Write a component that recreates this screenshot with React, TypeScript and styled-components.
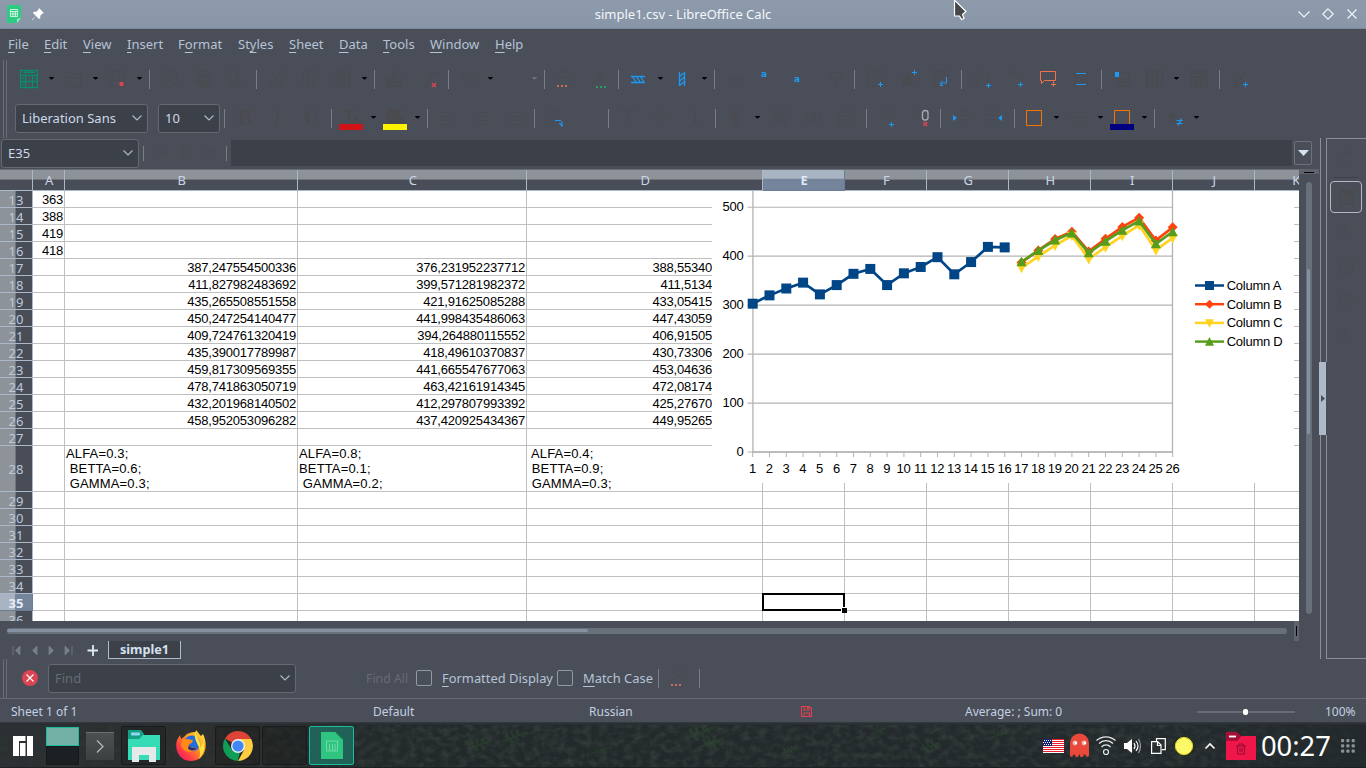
import React from 'react';
import styled, { createGlobalStyle, css } from 'styled-components';

const GlobalStyle = createGlobalStyle`
  * { box-sizing: border-box; }
  body {
    margin: 0;
    overflow: hidden;
    background: #4a4e59;
    font-family: 'Noto Sans', sans-serif;
    font-size: 13px;
    color: #b5c3d5;
  }
  svg { display: block; flex: none; overflow: visible; }
`;

const FAINT = '#4a4b4e';
const BLUE = '#1d99f3';
const RED = '#da4453';
const ORANGE = '#f67400';

const Desktop = styled.div`
  position: relative;
  width: 1366px;
  height: 768px;
  display: flex;
  flex-direction: column;
  overflow: hidden;
`;

/* ---------- title and menu ---------- */

const TitleBar = styled.header`
  height: 29px;
  flex: none;
  display: grid;
  grid-template-columns: 100px 1fr 100px;
  align-items: center;
  background: linear-gradient(#8d9aab, #8896a7);
  border-bottom: 1px solid #7b899b;
  color: #f3f7fb;
`;
const TitleText = styled.div`
  text-align: center;
  line-height: 28px;
`;
const TitleLeft = styled.div`
  display: flex;
  align-items: center;
  gap: 11px;
  padding-left: 7px;
`;
const TitleRight = styled.div`
  display: flex;
  align-items: center;
  justify-content: flex-end;
  gap: 12px;
  padding-right: 8px;
`;
const MenuBar = styled.nav`
  height: 31px;
  flex: none;
  display: flex;
  padding-left: 8px;
  line-height: 30px;
`;
const MenuItem = styled.div<{ $w: number }>`
  width: ${(p) => p.$w}px;
  white-space: nowrap;
`;
const Key = styled.span`
  text-decoration: underline;
  text-underline-offset: 3px;
  text-decoration-thickness: 1px;
`;

/* ---------- toolbars ---------- */

const ToolbarArea = styled.div`
  display: flex;
  height: 78px;
  flex: none;
`;
const Grip = styled.div`
  width: 4px;
  margin: 0 3px;
  border: solid #676c76;
  border-width: 0 1px;
`;
const ToolbarRows = styled.div`
  display: flex;
  flex-direction: column;
`;
const Toolbar = styled.div<{ $h: number; $pad: number }>`
  display: flex;
  align-items: center;
  height: ${(p) => p.$h}px;
  padding-left: ${(p) => p.$pad}px;
`;
const Tool = styled.div<{ $gap: number; $w?: number }>`
  flex: none;
  width: ${(p) => p.$w ?? 18}px;
  margin-left: ${(p) => p.$gap}px;
`;
const Separator = styled.div<{ $gap: number; $h?: number }>`
  flex: none;
  width: 1px;
  height: ${(p) => p.$h ?? 19}px;
  margin-left: ${(p) => p.$gap}px;
  background: #787d87;
`;
const Arrow = styled.div<{ $gap: number; $dim?: boolean }>`
  flex: none;
  width: 7px;
  height: 3px;
  margin: 0 0 2px ${(p) => p.$gap}px;
  background: ${(p) => (p.$dim ? '#6b7079' : '#050505')};
  clip-path: polygon(14% 0, 86% 0, 86% 33%, 57% 100%, 43% 100%, 14% 33%);
`;
const Combo = styled.div<{ $w: number; $gap?: number; $muted?: boolean }>`
  flex: none;
  display: flex;
  align-items: center;
  justify-content: space-between;
  width: ${(p) => p.$w}px;
  height: 29px;
  margin-left: ${(p) => p.$gap ?? 0}px;
  padding: 0 5px 1px 6px;
  border: 1px solid #636873;
  border-radius: 3px;
  background: #3c4049;
  color: ${(p) => (p.$muted ? '#676c76' : '#ccd9e9')};
  line-height: 20px;
  white-space: nowrap;
`;

/* ---------- work area ---------- */

const WorkArea = styled.div`
  display: flex;
  height: 521px;
  flex: none;
`;
const MainPane = styled.div`
  width: 1319px;
  display: flex;
  flex-direction: column;
`;
const FormulaBar = styled.div`
  display: flex;
  align-items: center;
  height: 32px;
  padding: 0 6px 1px 1px;
  border-bottom: 1px solid #6a6e77;
`;
const FormulaInput = styled.div`
  width: 1061px;
  height: 26px;
  margin: 0 2px 0 4px;
  background: #3c4049;
`;
const ExpandButton = styled.div`
  width: 18px;
  height: 24px;
  border: 1px solid #6c727d;
  border-radius: 2px;
  display: flex;
  align-items: center;
  justify-content: center;
`;
const SheetRow = styled.div`
  display: flex;
  height: 451px;
`;
const Sheet = styled.div`
  position: relative;
  width: 1299px;
  height: 451px;
  overflow: hidden;
  background: #fff;
`;
const SheetLine = styled.div<{ $h: number }>`
  display: flex;
  height: ${(p) => p.$h}px;
`;
const activeColumn = css`
  background: linear-gradient(#a9b4c2 0 8px, #9da7b5 8px 9px, #73849b 9px);
  border-color: #6c7c93;
  color: #dfeaf7;
  font-weight: bold;
`;
const activeRow = css`
  background: linear-gradient(90deg, #a9b4c2 0 15px, #73849b 15px);
  border-color: #6c7c93;
  color: #e3edf9;
  font-weight: bold;
`;
const ColumnHead = styled.div<{ $w: number; $active?: boolean }>`
  flex: none;
  width: ${(p) => p.$w}px;
  height: 21px;
  padding-left: 1.5px;
  border: solid #aab8c9;
  border-width: 0 1px 1px 0;
  background: linear-gradient(#8e9299 0 9px, #70747c 9px 10px, #494d58 10px);
  text-align: center;
  line-height: 21px;
  color: #c9d6e6;
  ${(p) => p.$active && activeColumn}
`;
const RowHead = styled.div<{ $active?: boolean; $tall?: boolean }>`
  flex: none;
  display: flex;
  align-items: center;
  justify-content: center;
  width: 33px;
  border: solid #aab8c9;
  border-width: 0 1px 1px 0;
  background: linear-gradient(90deg, #8e9299 0 15px, #70747c 15px 16px, #494d58 16px);
  line-height: 12px;
  padding-top: ${(p) => (p.$tall ? 0 : 2)}px;
  color: #bccadb;
  ${(p) => p.$active && activeRow}
`;
const Cell = styled.div<{ $w: number; $covered?: boolean; $text?: boolean }>`
  flex: none;
  width: ${(p) => p.$w}px;
  border: solid #bfbfbf;
  border-width: 0 1px 1px 0;
  padding-right: ${(p) => (p.$covered ? 50 : 1)}px;
  padding-left: 1px;
  font-family: 'Liberation Sans', Arial, sans-serif;
  font-size: 13px;
  line-height: ${(p) => (p.$text ? 15 : 17)}px;
  letter-spacing: ${(p) => (p.$text ? 0.15 : -0.21)}px;
  text-align: ${(p) => (p.$text ? 'left' : 'right')};
  white-space: pre;
  color: #000;
`;
const CellCursor = styled.div`
  position: absolute;
  left: 762px;
  top: 423px;
  width: 83px;
  height: 18px;
  border: 2px solid #000;
  &::after {
    content: '';
    position: absolute;
    right: -4px;
    bottom: -4px;
    width: 5px;
    height: 5px;
    background: #000;
    box-shadow: -1px -1px 0 #fff;
  }
`;
const ChartFrame = styled.div`
  position: absolute;
  left: 712px;
  top: 21px;
  width: 582px;
  height: 292px;
  background: #fff;
  overflow: hidden;
`;
const VerticalScroll = styled.div`
  width: 20px;
  display: flex;
  flex-direction: column;
  align-items: center;
`;
const SplitTop = styled.div`
  align-self: stretch;
  height: 5px;
  margin-top: -1px;
  background: #5f636d;
  padding: 3px 5px 0;
  &::after {
    content: '';
    display: block;
    height: 1px;
    background: #000;
  }
`;
const VTrack = styled.div`
  width: 6px;
  height: 432px;
  margin-top: 8px;
  border-radius: 3px;
  background: #67707b;
  padding: 87px 1px 0 1px;
`;
const VThumb = styled.div`
  width: 3px;
  height: 165px;
  border-radius: 2px;
  background: #8591a1;
`;
const HorizontalScroll = styled.div`
  display: flex;
  height: 20px;
  flex: none;
  padding-left: 7px;
`;
const HTrack = styled.div`
  width: 1280px;
  height: 6px;
  margin: 7px 7px 0 0;
  border-radius: 3px;
  background: #67707b;
  padding-top: 1px;
`;
const HThumb = styled.div`
  width: 581px;
  height: 3px;
  border-radius: 2px;
  background: #8591a1;
`;
const SplitEnd = styled.div`
  width: 5px;
  background: #5f636d;
  padding: 5px 2px;
  &::after {
    content: '';
    display: block;
    height: 10px;
    width: 1px;
    background: #000;
  }
`;
const TabBar = styled.div`
  display: flex;
  height: 18px;
  flex: none;
  align-items: center;
  padding-left: 11px;
`;
const TabNav = styled.div`
  display: flex;
  gap: 9px;
  width: 76px;
`;
const SheetTab = styled.div`
  width: 73px;
  height: 18px;
  margin-left: 10px;
  border: 1px solid #aebccd;
  border-top: 0;
  background: #3c4049;
  color: #d5e1ef;
  font-size: 12.7px;
  font-weight: bold;
  line-height: 17px;
  text-align: center;
`;

/* ---------- sidebar ---------- */

const Splitter = styled.div`
  width: 8px;
  padding-left: 1px;
  display: flex;
  flex-direction: column;
`;
const SplitRail = styled.div<{ $h: number }>`
  height: ${(p) => p.$h}px;
  width: 7px;
  border: solid #8b9098;
  border-width: 0 1px;
  background: #4a4e59;
`;
const SplitHandle = styled.div`
  height: 73px;
  margin-left: -1px;
  width: 7px;
  background: #aebaca;
  display: flex;
  align-items: center;
  justify-content: center;
`;
const Sidebar = styled.aside`
  flex: 1;
  padding-right: 2px;
  border: solid #8b9098;
  border-width: 1px 0;
  display: flex;
  flex-direction: column;
  align-items: center;
`;
const DeckTitle = styled.div`
  height: 42px;
  padding-top: 8px;
`;
const DeckButton = styled.div<{ $active?: boolean }>`
  width: 32px;
  height: ${(p) => (p.$active ? 32 : 35)}px;
  display: flex;
  align-items: center;
  justify-content: center;
  border: 1px solid ${(p) => (p.$active ? '#b5b9bf' : 'transparent')};
  border-radius: 4px;
`;

/* ---------- find bar and status bar ---------- */

const FindBar = styled.div`
  display: flex;
  align-items: center;
  height: 39px;
  flex: none;
  padding-bottom: 1px;
`;
const FindGrip = styled(Grip)`
  align-self: stretch;
  margin-bottom: -1px;
`;
const FindAll = styled.span`
  margin-left: 70px;
  width: 50px;
  font-size: 12.3px;
  color: #666b76;
`;
const CheckBox = styled.span`
  width: 16px;
  height: 16px;
  border: 1px solid #8d98a8;
  border-radius: 2px;
  margin-right: 10px;
`;
const CheckLabel = styled.span<{ $w: number }>`
  width: ${(p) => p.$w}px;
  font-size: 12.9px;
  white-space: nowrap;
`;
const StatusBar = styled.footer`
  display: flex;
  align-items: center;
  height: 24px;
  flex: none;
  padding: 1px 0 0 11px;
  border-top: 1px solid #656a75;
  color: #c3d0e2;
  font-size: 12px;
  white-space: nowrap;
`;
const StatusField = styled.span<{ $w: number }>`
  width: ${(p) => p.$w}px;
  flex: none;
`;
const ZoomSlider = styled.span`
  width: 98px;
  height: 2px;
  margin: 1px 30px 0 0;
  background: #666b76;
  display: flex;
  align-items: center;
  justify-content: center;
  &::after {
    content: '';
    width: 5px;
    height: 6px;
    margin-right: 2px;
    border-radius: 2px;
    background: #fff;
  }
`;

/* ---------- taskbar ---------- */

const Taskbar = styled.div`
  position: relative;
  flex: none;
  height: 46px;
  padding-top: 2px;
  display: flex;
  justify-content: space-between;
  align-items: center;
  background: linear-gradient(#343a3f 0, #242a2d 3px, #22282b 100%);
  border-bottom: 1px solid #1c2124;
`;
const Foliage = styled.svg`
  position: absolute;
  inset: 0;
`;
const TaskGroup = styled.div`
  position: relative;
  display: flex;
  align-items: center;
`;
const Pager = styled.div`
  width: 33px;
  margin: 0 7px 0 13px;
`;
const Desk = styled.div<{ $on?: boolean }>`
  height: 19px;
  border: 1px solid ${(p) => (p.$on ? '#1abc9c' : '#15191b')};
  background: ${(p) => (p.$on ? '#73b0a5' : '#1c2022')};
`;
const Launcher = styled.div`
  width: 28px;
  height: 28px;
  margin-right: 7px;
  background: linear-gradient(#4c5052, #3b4041);
  border-top: 1px solid #6b6f71;
  display: flex;
  align-items: center;
  justify-content: center;
`;
const TaskButton = styled.div<{ $kind?: 'plain' | 'active' }>`
  width: 45px;
  height: 39px;
  margin-right: 2px;
  border-radius: 2px;
  display: flex;
  align-items: center;
  justify-content: center;
  border: 1px solid transparent;
  ${(p) => !p.$kind && 'border-color: #171b1d; background: rgba(0,0,0,0.16);'}
  ${(p) => p.$kind === 'plain' && 'padding-left: 2px;'}
  ${(p) => p.$kind === 'active' && 'border-color: #1abc9c; background: #216258;'}
`;
const Clock = styled.div`
  width: 80px;
  font-size: 27.3px;
  line-height: 40px;
  color: #fff;
`;
const TrayItem = styled.div<{ $w: number }>`
  width: ${(p) => p.$w}px;
  flex: none;
`;
const Pointer = styled.svg`
  position: absolute;
  left: 953px;
  top: -1px;
`;

/* ---------- drawings ---------- */

const Chevron = ({ color = '#aebccd' }: { color?: string }) => (
  <svg width="10" height="6" viewBox="0 0 10 6" fill="none" stroke={color} strokeWidth="1.1">
    <path d="M.5.5 5 5 9.5.5" />
  </svg>
);

const Plus = ({ x, y, c = BLUE }: { x: number; y: number; c?: string }) => (
  <path d={`M${x - 2} ${y + 0.5}h5M${x + 0.5} ${y - 2}v5`} stroke={c} />
);
const Dots = ({ x, y, c }: { x: number; y: number; c: string }) => (
  <path d={`M${x} ${y}h2M${x + 4} ${y}h2M${x + 8} ${y}h2`} stroke={c} strokeWidth="2" />
);
const Cross = ({ x, y }: { x: number; y: number }) => (
  <path d={`M${x - 2} ${y - 2}l4 4m0-4l-4 4`} stroke={RED} strokeWidth="1.5" />
);
const textLines = 'M2 3.5h14M2 7.5h9M2 11.5h14M2 15.5h9';

const art: Record<string, React.ReactNode> = {
  table: <path d="M.5.5h17v17H.5zM.5 5.5h17M3.5 2.5h11M5.5 5.5v12M12.5 5.5v12M.5 11.5h17M8.5 8.5h1M8.5 14.5h1M2 8.5h2M2 14.5h2M14.5 8.5h2" stroke="#0a8c6d" strokeWidth="1.3" />,
  open: <path d="M1.5 16.5v-14h5l2 2h8v12zM1.5 7.5h15" />,
  save: <><path d="M1.5 1.5h12l3 3v12h-15zM4.5 1.5v5h7v-5M4.5 16.5v-6h9v6" /><circle cx="13.5" cy="14" r="2.3" fill={RED} stroke="none" /></>,
  export: <path d="M3.5 1.5h12v11l-4 4h-8zM7 5.5v6h4v-6M11.5 16v-4h4" />,
  print: <path d="M4.5 5V1.5h9V5M1.5 5.5h15v7h-15zM4.5 10.5h9v6h-9zM4 7.5h9" strokeWidth="1.5" />,
  preview: <path d="M12.5 6V5l-4-3.5h-6v15h10M8.5 2v4h4M10 9.5a3 3 0 1 0 .1 0zM12 14l3 3" />,
  cut: <path d="M4 1l8 12M14 1L6 13M4 12a2.5 2.5 0 1 0 .1 0zM14 12a2.5 2.5 0 1 0 .1 0z" />,
  copy: <path d="M2.500 12.500v-11h10v3M6.500 4.500h9v8l-4 4h-5zM11.500 16v-4h4" />,
  paste: <path d="M2.500 2.500h13v14h-13zM6 1.500h6v3H6zM5 8.500h8M5 11.500h8" strokeWidth="1.600" />,
  brush: <path d="M8.500 1v7M3 8.500h12v3H3zM3 11.500L1.500 16.500h14V12M6 12v4M10 12v4" strokeWidth="1.600" />,
  clear: <><path d="M5 2.500h12M11.500 2.500L5 16M2 16.500h6" /><Cross x={13} y={15} /></>,
  undo: <path d="M2 4.500h9a4 4 0 0 1 0 9H9M5 1.500l-3 3 3 3" />,
  none: null,
  find: <><path d="M3 13a6 6 0 1 1 12 0M5 4l2-3h4l2 3" /><Dots x={2} y={16} c="#cf6a53" /></>,
  spell: <><path d="M2 13L7.500 2 13 13M4 9.500h7" /><Dots x={4} y={17} c="#2a9d62" /></>,
  rows: <path d="M2 6.500h14M2 12.500h14M3 6l4 6M7 6l4 6M11 6l4 6" stroke={BLUE} strokeWidth="1.300" />,
  cols: <path d="M6.500 2v14M11.500 2v14M6.500 6.500l5-4M6.500 11.500l5-5M6.500 15.500l5-4" stroke={BLUE} strokeWidth="1.300" />,
  sort: <path d="M2 9.500h14M5 6.500l-3 3 3 3M13 6.500l3 3-3 3" />,
  filter: <path d="M2 2.500h14l-6 7v6l-3-2v-4z" />,
  image: <><path d="M1.500 1.500h15v15h-15zM2 13l5-5 4 4M11 5.500h2" /><Plus x={14} y={14} /></>,
  chart: <><path d="M3.500 16v-9M7.500 16V3M11 16V5" strokeWidth="3" /><Plus x={14} y={2} /></>,
  pivot: <><path d="M1.500 1.500h15v15h-15zM1.500 5.500h15M5.500 1.500v15M9 2v3M13 2v3" /><path d="M14.500 7v6h-6M10.500 11l-2.500 2.500 2.500 2M8 15.500h3" stroke={BLUE} /></>,
  omega: <><path d="M1.500 16.500h4v-2a7 7 0 1 1 8 0" /><Plus x={15} y={15} /></>,
  link: <><path d="M2 5a5 5 0 0 1 9 0M8 11l4-4" /><Plus x={14} y={14} /></>,
  comment: <path d="M1.500 1.500h15v9H5.500l-3 3v-3h-1zM14.500 11.500v5M12 14.500h5" stroke="#f4714e" />,
  headfoot: <><path d="M3.500 1.500v15M14.500 1.500v15" /><path d="M4 3.500h10M4 14.500h10" stroke={BLUE} /></>,
  define: <><path d="M3.500 8.500h12v8h-12zM8 2.500h7v5M7 9v8M11 9v8M4 12.500h11" /><path d="M1 2h4v5H1z" fill={BLUE} stroke="none" /></>,
  freeze: <path d="M1.500 1.500h15v15h-15zM1.500 5.500h15M6.500 1.500v15M11.500 5.500v11M6.500 11.500h10" strokeWidth="1.600" />,
  split: <path d="M1.500 1.500h15v15h-15zM1.500 7h15M6.500 9v7M11.500 9v7M2 3.500h14" strokeWidth="1.600" />,
  draw: <><path d="M2 14.500L14 2.500M1 16.500h6" strokeWidth="2" /><Plus x={13} y={14} /></>,
  al: <path d={textLines} />,
  ac: <path d="M2 3.500h14M4.500 7.500h9M2 11.500h14M4.500 15.500h9" />,
  ar: <path d="M2 3.500h14M7 7.500h9M2 11.500h14M7 15.500h9" />,
  wrap: <><path d="M2 2.500h12M2 6.500h6M2 10.500h6M2 14.500h6" /><path d="M9 11.500h5.500l1.500 1.500v4M13 14.500h2v2.500h2" stroke={BLUE} /></>,
  vt: <path d="M2 2.500h14M9 5v11M6.500 7.500l2.500-3 2.500 3" />,
  vc: <path d="M2 9.500h14M9 1v6M9 12v5" />,
  vb: <path d="M9 2v11M6.500 11l2.500 3 2.500-3" />,
  date: <path d="M1.500 3.500h15v13h-15zM1.500 6.500h15M5 1v3M13 1v3M5 10h3v4M11 10v4" />,
  adddec: <><path d="M3.500 2.500h3v7h-3zM9.500 2.500h3v7h-3z" /><Plus x={13} y={15} /></>,
  deldec: <><rect x="10.500" y="1.500" width="5.500" height="9.500" rx="2.500" stroke="#a9abae" strokeWidth="1.300" /><path d="M3.500 2.500h3v7h-3z" /><Cross x={13.300} y={15} /></>,
  ind: <><path d="M8 2.500h9M8 6.500h9M8 10.500h9M2 14.500h15" /><path d="M1 6v6l4-3z" fill={BLUE} stroke="none" /></>,
  outd: <><path d="M1 2.500h9M1 6.500h9M1 10.500h9M1 14.500h15" /><path d="M17 6v6l-4-3z" fill={BLUE} stroke="none" /></>,
  borders: <path d="M1.500 1.500h15v15h-15z" stroke={ORANGE} />,
  lines: <path d="M2 3.500h15M2 8.500h15M2 14.500h15" />,
  cond: <><path d="M3 8l3-5 3 5-3 4zM3 12h6" fill={FAINT} /><path d="M10.500 11.500h6M10.500 14.500h6M12 16.500l3.500-7" stroke={BLUE} strokeWidth="1.200" /></>,
};

const Glyph = ({ name }: { name: string }) => (
  <svg width="18" height="18" viewBox="0 0 18 18" fill="none" stroke={FAINT}>
    {art[name]}
  </svg>
);

const ToolLetter = styled.span<{ $b?: boolean; $i?: boolean; $s?: number }>`
  display: block;
  text-align: center;
  font: ${(p) => (p.$i ? 'italic' : 'normal')} ${(p) => (p.$b ? 'bold' : 'normal')} ${(p) => p.$s ?? 20}px/18px 'Liberation Serif', serif;
  color: ${FAINT};
`;
const SortLetter = styled.span<{ $down?: boolean }>`
  display: block;
  height: 18px;
  font: bold 9px/8px 'DejaVu Sans', sans-serif;
  padding-top: ${(p) => (p.$down ? 5 : 0)}px;
  color: ${BLUE};
`;

type ColorKind = 'font' | 'fill' | 'line';
const ColorGlyph = ({ kind, bar }: { kind: ColorKind; bar: string }) => (
  <svg width="24" height="24" viewBox="0 0 24 24" fill="none" stroke={FAINT}>
    {kind === 'font' && <path d="M5 5h11M10.500 5v12M17 9v8M14 17l3-6 3 6" strokeWidth="2" />}
    {kind === 'fill' && <path d="M4 4h13v8h4v5H4z" fill={FAINT} />}
    {kind === 'line' && <path d="M4.500 19V4.500h15V19" stroke={ORANGE} />}
    <path d="M0 21h24" stroke={bar} strokeWidth="6" />
  </svg>
);

type ToolSpec = [string, number];
const A = 'arrow';
const S = 'sep';
const standardTools: ToolSpec[] = [
  ['table', 0], [A, 10], ['open', 9], [A, 10], ['save', 9], [A, 10], [S, 6],
  ['export', 11], ['print', 15], ['preview', 15], [S, 11],
  ['cut', 11], ['copy', 15], ['paste', 15], [A, 9], [S, 6],
  ['brush', 11], ['clear', 17], [S, 9],
  ['undo', 11], [A, 9], ['none', 10], ['dim', 9], [S, 6],
  ['find', 10], ['spell', 19], [S, 8],
  ['rows', 10], [A, 10], ['cols', 9], [A, 10], [S, 6],
  ['sort', 11], ['asc', 17], ['desc', 15], ['filter', 15], [S, 9],
  ['image', 11], ['chart', 16], ['pivot', 14], [S, 11],
  ['omega', 11], ['link', 15], ['comment', 15], ['headfoot', 15], [S, 11],
  ['define', 12], ['freeze', 14], [A, 9], ['split', 10], [S, 11],
  ['draw', 12],
];
const formatTools: ToolSpec[] = [
  [S, 4], ['bold', 11], ['italic', 14], ['under', 16], [S, 11],
  ['fontcolor', 7], [A, 7], ['fillcolor', 6], [A, 7], [S, 6],
  ['al', 11], ['ac', 15], ['ar', 15], [S, 11],
  ['wrap', 11], ['none', 15], [S, 11],
  ['vt', 11], ['vc', 14], ['vb', 16], [S, 11],
  ['money', 10], [A, 10], ['percent', 10], ['number', 15], ['date', 15], [S, 11],
  ['adddec', 11], ['deldec', 16], [S, 10],
  ['ind', 11], ['outd', 15], [S, 11],
  ['borders', 10], [A, 10], ['lines', 9], [A, 10], ['linecolor', 6], [A, 7], [S, 6],
  ['cond', 11], [A, 9],
];

const special: Record<string, React.ReactNode> = {
  asc: <SortLetter>a</SortLetter>,
  desc: <SortLetter $down>a</SortLetter>,
  bold: <ToolLetter $b $s={23}>B</ToolLetter>,
  italic: <ToolLetter $i $s={22}>I</ToolLetter>,
  under: <ToolLetter $b>U</ToolLetter>,
  money: <ToolLetter $b>$</ToolLetter>,
  percent: <ToolLetter>%</ToolLetter>,
  number: <ToolLetter $s={17}>00</ToolLetter>,
};
const colorTools: Record<string, [ColorKind, string]> = {
  fontcolor: ['font', '#d01317'],
  fillcolor: ['fill', '#fff200'],
  linecolor: ['line', '#000080'],
};

const Tools = ({ items }: { items: ToolSpec[] }) => (
  <>
    {items.map(([name, gap], i) => {
      if (name === A || name === 'dim') return <Arrow key={i} $gap={gap} $dim={name === 'dim'} />;
      if (name === S) return <Separator key={i} $gap={gap} />;
      if (colorTools[name]) {
        const [kind, bar] = colorTools[name];
        return <Tool key={i} $gap={gap} $w={24}><ColorGlyph kind={kind} bar={bar} /></Tool>;
      }
      return <Tool key={i} $gap={gap}>{special[name] ?? <Glyph name={name} />}</Tool>;
    })}
  </>
);

/* ---------- sheet data ---------- */

const columns: [string, number][] = [
  ['A', 32], ['B', 233], ['C', 229], ['D', 236], ['E', 82], ['F', 82],
  ['G', 82], ['H', 82], ['I', 82], ['J', 82], ['K', 82],
];

const sheetData: Record<number, string[]> = {
  13: ['363'], 14: ['388'], 15: ['419'], 16: ['418'],
  17: ['', '387,247554500336', '376,231952237712', '388,55340'],
  18: ['', '411,827982483692', '399,571281982372', '411,5134'],
  19: ['', '435,265508551558', '421,91625085288', '433,05415'],
  20: ['', '450,247254140477', '441,998435486063', '447,43059'],
  21: ['', '409,724761320419', '394,264880115552', '406,91505'],
  22: ['', '435,390017789987', '418,49610370837', '430,73306'],
  23: ['', '459,817309569355', '441,665547677063', '453,04636'],
  24: ['', '478,741863050719', '463,42161914345', '472,08174'],
  25: ['', '432,201968140502', '412,297807993392', '425,27670'],
  26: ['', '458,952053096282', '437,420925434367', '449,95265'],
  28: ['', 'ALFA=0.3;\n BETTA=0.6;\n GAMMA=0.3;', 'ALFA=0.8;\nBETTA=0.1;\n GAMMA=0.2;', ' ALFA=0.4;\n BETTA=0.9;\n GAMMA=0.3;'],
};
const rowNumbers = Array.from({ length: 24 }, (_, i) => i + 13);

/* ---------- chart ---------- */

const px = (n: number) => 40.7 + (n - 1) * 16.8;
const py = (v: number) => 261 - v * 0.4895;
const seriesA = [303, 320, 334, 346, 322, 341, 364, 374, 341, 365, 378, 398, 363, 388, 419, 418];
const seriesB = [387.2, 411.8, 435.3, 450.2, 409.7, 435.4, 459.8, 478.7, 432.2, 459];
const seriesC = [376.2, 399.6, 421.9, 442, 394.3, 418.5, 441.7, 463.4, 412.3, 437.4];
const seriesD = [388.6, 411.5, 433.1, 447.4, 406.9, 430.7, 453, 472.1, 425.3, 450];

const markers: Record<string, string> = {
  square: 'M-5-5H5V5H-5z',
  diamond: 'M0-5L5 0 0 5-5 0z',
  down: 'M-5-4H5L0 5.500z',
  up: 'M0-5L5 4.500H-5z',
};
const seriesList = [
  { name: 'Column A', color: '#004586', shape: 'square', start: 1, data: seriesA },
  { name: 'Column B', color: '#ff420e', shape: 'diamond', start: 17, data: seriesB },
  { name: 'Column C', color: '#ffd320', shape: 'down', start: 17, data: seriesC },
  { name: 'Column D', color: '#579d1c', shape: 'up', start: 17, data: seriesD },
];
const ChartText = styled.text`
  font: 13px 'Liberation Sans', Arial, sans-serif;
  letter-spacing: -0.25px;
  fill: #000;
`;

const Chart = () => (
  <svg width="582" height="292" viewBox="0 0 582 292" fill="none">
    {[0, 100, 200, 300, 400, 500].map((v) => (
      <g key={v}>
        <path d={`M35.500 ${py(v)}H460.500`} stroke="#b3b3b3" strokeWidth="1.200" />
        <ChartText x="31.500" y={py(v) + 4} textAnchor="end">{v}</ChartText>
      </g>
    ))}
    <path d="M40.900 0V261H460.500V0" stroke="#b3b3b3" strokeWidth="1.300" />
    {Array.from({ length: 26 }, (_, i) => i + 1).map((n) => (
      <g key={n}>
        <path d={`M${px(n)} 261v5`} stroke="#b3b3b3" />
        <ChartText x={px(n) - 0.3} y="282" textAnchor="middle">{n}</ChartText>
      </g>
    ))}
    {seriesList.map((s, i) => (
      <g key={s.name} fill={s.color}>
        <polyline
          points={s.data.map((v, k) => `${px(k + s.start)},${py(v)}`).join(' ')}
          fill="none"
          stroke={s.color}
          strokeWidth="2.700"
        />
        {s.data.map((v, k) => (
          <path key={k} d={markers[s.shape]} transform={`translate(${px(k + s.start)} ${py(v)})`} />
        ))}
        <path d={`M483 ${94.500 + i * 18.700}h29`} stroke={s.color} strokeWidth="2.500" />
        <path d={markers[s.shape]} transform={`translate(497.500 ${94.500 + i * 18.700}) scale(.9)`} />
        <ChartText x="514.700" y={99 + i * 18.700}>{s.name}</ChartText>
      </g>
    ))}
  </svg>
);

/* ---------- taskbar drawings ---------- */

const FilesIcon = () => (
  <svg width="32" height="32" viewBox="0 0 32 32">
    <path d="M0 0h13l3 4v5H0z" fill="#16a085" />
    <rect x="3" y="2.500" width="9" height="3" rx="1" fill="#8fd8ef" />
    <path d="M0 9h11l4-4h17v25H0z" fill="#35dcb5" />
    <path d="M4 17h24v15h-7v-7h-10v7H4z" fill="#e6e8ea" />
  </svg>
);
const FirefoxIcon = () => (
  <svg width="31" height="31" viewBox="0 0 31 31">
    <defs>
      <linearGradient id="fox" x1="1" y1="0" x2="0" y2="1">
        <stop offset="0" stopColor="#fff44f" />
        <stop offset=".4" stopColor="#ff9a1f" />
        <stop offset=".75" stopColor="#ff3647" />
        <stop offset="1" stopColor="#e31587" />
      </linearGradient>
    </defs>
    <path d="M20 0c2 2 3 4 5 6l2-2c6 12 2 27-12 27C4 31-2 20 1 10l3-5 1 4 4-3c2-3 7-4 11-4z" fill="url(#fox)" />
    <circle cx="16" cy="13.500" r="8" fill="#1d6fe0" />
    <path d="M6 10l5-1c2 0 4 1 6 1l-1 3-3 1c0 3 4 5 8 3-2 7-14 7-16-2z" fill="#ff8a16" />
    <path d="M13 15c1 3 5 4 8 2-2 5-8 4-9 1z" fill="#2b2a7c" />
    <path d="M20 0c-2 7 6 9 4 18 2-3 3-5 3-8 3 8 0 15-4 19C28 16 15 12 20 0z" fill="#ffe23d" />
  </svg>
);
const ChromeIcon = () => (
  <svg width="30" height="30" viewBox="0 0 30 30">
    <path d="M15 15L2 7.500A15 15 0 0 1 28 7.500z" fill="#db4437" />
    <path d="M15 8h13.200A15 15 0 0 1 15 30l6-11z" fill="#ffcd40" />
    <path d="M2 7.500l7 11.500 6 3 2 0L14.500 30A15 15 0 0 1 2 7.500z" fill="#0f9d58" />
    <circle cx="15" cy="15" r="7" fill="#f1f1f1" />
    <circle cx="15" cy="15" r="5.600" fill="#4285f4" />
  </svg>
);
const CalcIcon = () => (
  <svg width="22" height="27" viewBox="0 0 22 27">
    <path d="M0 0h15l7 7v20H0z" fill="#2fc47f" />
    <path d="M15 0l7 7z" stroke="#16724f" strokeWidth="1.500" />
    <path d="M5.500 9h11v10h-11zM8.500 12v7M11.500 12v7M14 12v7" fill="none" stroke="#6fdcab" />
  </svg>
);
const FlagIcon = () => (
  <svg width="21" height="14" viewBox="0 0 21 14">
    <path d="M0 0h21v14H0z" fill="#fff" />
    <path d="M0 .5h21M0 2.500h21M0 4.500h21M0 6.500h21M0 8.500h21M0 10.500h21M0 12.500h21" stroke="#e8212e" />
    <path d="M0 0h9v7H0z" fill="#14226e" />
    <path d="M1 1.500h8M0 3.500h8M1 5.500h8" stroke="#fff" strokeDasharray="1 1" />
  </svg>
);
const GhostIcon = () => (
  <svg width="19" height="23" viewBox="0 0 19 23">
    <path d="M0 22V9a9.500 9.500 0 0 1 19 0v13l-2 1-2.500-3-2 3h-2L9.500 20 8 23H6l-2-3-2 3z" fill="#e8493a" />
    <circle cx="5" cy="9" r="2.400" fill="#eab9b2" /><circle cx="14" cy="9" r="2.400" fill="#eab9b2" />
    <circle cx="6" cy="9" r="1.200" fill="#fff" /><circle cx="15" cy="9" r="1.200" fill="#fff" />
  </svg>
);
const WifiIcon = () => (
  <svg width="20" height="20" viewBox="0 0 20 20" fill="none" stroke="#e8eaeb" strokeWidth="1.200">
    <circle cx="10" cy="16" r="2.500" />
    <path d="M5.500 11a6 6 0 0 1 9 0M3 7.500a10 10 0 0 1 14 0M.5 4.500a14 14 0 0 1 19 0" />
  </svg>
);
const VolumeIcon = () => (
  <svg width="17" height="16" viewBox="0 0 17 16" fill="none" stroke="#fff" strokeWidth="1.200">
    <path d="M0 5h3l5-4v14l-5-4H0z" fill="#fff" stroke="none" />
    <path d="M10 5q2 3 0 6M12 3q4 5 0 10" /><path d="M14.500 1q4 7 0 14" stroke="#989c9e" />
  </svg>
);
const ClipboardIcon = () => (
  <svg width="15" height="16" viewBox="0 0 15 16" fill="none" stroke="#fff" strokeWidth="1.200">
    <path d="M5.500 3V.6h8.800v11H11M.6 3.600h6l3.400 3.500v8.300H.6zM6.500 4v3.500h3" />
  </svg>
);
const TrashIcon = () => (
  <svg width="30" height="28" viewBox="0 0 30 28">
    <path d="M0 0h11l3.500 3.500L11 9H0z" fill="#a80f35" />
    <path d="M0 9h11l4-5h15v24H0z" fill="#f0164a" />
    <path d="M3 4.500h7" stroke="#fff" strokeWidth="1.800" />
    <path d="M10 14h10M13 14v-2h4v2M11.500 14v8h7v-8M14 16v4M16 16v4" stroke="#8e0d2f" fill="none" />
  </svg>
);
const ManjaroIcon = () => (
  <svg width="20" height="20" viewBox="0 0 20 20" fill="#fff">
    <path d="M0 0h12.500v5H6v15H0zM7 7h5.500v13H7zM14 0h6v20h-6z" />
  </svg>
);

const fronds = [
  [480, 30, 1], [515, 22, 1], [700, 18, 1.2], [712, 28, 1], [790, 36, 0.7], [600, 36, 0.6], [930, 32, 0.8], [880, 16, 0.6], [1000, 20, 0.7],
];
const TaskbarFoliage = () => (
  <Foliage width="1366" height="46" viewBox="0 0 1366 46">
    <defs>
      <filter id="leaves" x="0" y="0" width="100%" height="100%">
        <feTurbulence type="fractalNoise" baseFrequency="0.12 0.16" numOctaves="3" seed="8" />
        <feColorMatrix values="0 0 0 0 0.2  0 0 0 0 0.27  0 0 0 0 0.18  1.200 0 0 0 -0.450" />
      </filter>
      <linearGradient id="fade">
        <stop offset="0" stopColor="#2c3234" stopOpacity=".8" />
        <stop offset=".16" stopColor="#2e2f2d" stopOpacity=".8" />
        <stop offset=".3" stopColor="#232a28" stopOpacity=".2" />
        <stop offset=".85" stopColor="#22282b" stopOpacity=".2" />
        <stop offset="1" stopColor="#22282b" stopOpacity=".8" />
      </linearGradient>
    </defs>
    <rect y="3" width="1366" height="42" filter="url(#leaves)" opacity=".4" />
    <rect y="3" width="1366" height="42" fill="url(#fade)" />
    {fronds.map(([x, y, s], i) => (
      <path
        key={i}
        transform={`translate(${x} ${y - 8}) scale(${s})`}
        d="M-12 5L12-4M-6 3l-3-6M-2 1l-2-7M3-1l-1-5M-5 3l3 4M0 0l4 5M5-2l4 3"
        stroke="#2c4c2f"
        strokeWidth="2.200"
        opacity=".45"
      />
    ))}
  </Foliage>
);

/* ---------- page ---------- */

const menus: [string, string, string, number][] = [
  ['', 'F', 'ile', 36], ['', 'E', 'dit', 39], ['', 'V', 'iew', 44], ['', 'I', 'nsert', 51],
  ['F', 'o', 'rmat', 60], ['St', 'y', 'les', 51], ['', 'S', 'heet', 50], ['', 'D', 'ata', 44],
  ['', 'T', 'ools', 47], ['', 'W', 'indow', 65], ['', 'H', 'elp', 40],
];

const navPaths = ['M2 1v9M9 1L4.500 5.500 9 10z', 'M8 1L3.500 5.500 8 10z', 'M2 1l4.500 4.500L2 10z', 'M7 1v9M0 1l4.500 4.500L0 10z'];

export default function App() {
  return (
    <Desktop>
      <GlobalStyle />
      <TitleBar>
        <TitleLeft>
          <svg width="14" height="18" viewBox="0 0 14 18">
            <path d="M0 0h14v14l-4 4H0z" fill="#2ecc82" />
            <path d="M14 13l-4 5v-4z" fill="#a5ecc9" />
            <path d="M3.500 4.500h7v7h-7zM3.500 6.500h7M3.500 9h7M6 6.500v5M8.500 6.500v5" fill="none" stroke="#d8f7e8" strokeWidth=".9" />
          </svg>
          <svg width="12" height="12" viewBox="0 0 12 12" fill="#fff">
            <path d="M7 0l5 5-1.500.5-2.500 2.500.5 2L7 11 4 8l-3.500 4L0 11.500 4 8 1 5l1-1.500 2 .5L6.500 1.500z" />
          </svg>
        </TitleLeft>
        <TitleText>simple1.csv - LibreOffice Calc</TitleText>
        <TitleRight>
          <svg width="12" height="12" viewBox="0 0 12 12" fill="none" stroke="#eef4fa" strokeWidth="1.200"><path d="M.5 3.500L6 9l5.500-5.500" /></svg>
          <svg width="12" height="12" viewBox="0 0 12 12" fill="none" stroke="#eef4fa" strokeWidth="1.200"><path d="M6 .8L11.200 6 6 11.200.8 6z" /></svg>
          <svg width="12" height="12" viewBox="0 0 12 12" fill="none" stroke="#eef4fa" strokeWidth="1.200"><path d="M1.500 1.500l9 9m0-9l-9 9" /></svg>
        </TitleRight>
      </TitleBar>

      <MenuBar>
        {menus.map(([a, k, b, w]) => (
          <MenuItem key={a + k + b} $w={w}>{a}<Key>{k}</Key>{b}</MenuItem>
        ))}
      </MenuBar>

      <ToolbarArea>
        <Grip />
        <ToolbarRows>
          <Toolbar $h={38} $pad={10}><Tools items={standardTools} /></Toolbar>
          <Toolbar $h={40} $pad={5}>
            <Combo $w={133}>Liberation Sans<Chevron /></Combo>
            <Combo $w={62} $gap={10}>10<Chevron /></Combo>
            <Tools items={formatTools} />
          </Toolbar>
        </ToolbarRows>
      </ToolbarArea>

      <WorkArea>
        <MainPane>
          <FormulaBar>
            <Combo $w={138}>E35<Chevron /></Combo>
            <Separator $gap={4} $h={15} />
            <Tool $gap={12} $w={70}>
              <svg width="60" height="14" viewBox="0 0 60 14" fill="none" stroke={FAINT}>
                <path d="M2 12q3 0 3-5t3-5M2 6h6M7 7l4 5M11 7l-4 5M24 2.500h10M24 12.500h10M24 3l6 4-6 5M48 5h10M48 9h10" />
              </svg>
            </Tool>
            <Separator $gap={0} $h={15} />
            <FormulaInput />
            <ExpandButton>
              <svg width="11" height="6" viewBox="0 0 11 6"><path d="M0 0h11L5.500 6z" fill="#d5e2f1" /></svg>
            </ExpandButton>
          </FormulaBar>

          <SheetRow>
            <Sheet>
              <SheetLine $h={21}>
                <ColumnHead $w={33} />
                {columns.map(([name, w]) => (
                  <ColumnHead key={name} $w={w} $active={name === 'E'}>{name}</ColumnHead>
                ))}
              </SheetLine>
              {rowNumbers.map((n) => (
                <SheetLine key={n} $h={n === 28 ? 46 : 17}>
                  <RowHead $active={n === 35} $tall={n === 28}>{n}</RowHead>
                  {columns.map(([name, w], c) => (
                    <Cell key={name} $w={w} $text={n === 28} $covered={name === 'D' && n !== 28}>
                      {sheetData[n]?.[c] ?? ''}
                    </Cell>
                  ))}
                </SheetLine>
              ))}
              <ChartFrame><Chart /></ChartFrame>
              <CellCursor />
            </Sheet>
            <VerticalScroll>
              <SplitTop />
              <VTrack><VThumb /></VTrack>
            </VerticalScroll>
          </SheetRow>

          <HorizontalScroll>
            <HTrack><HThumb /></HTrack>
            <SplitEnd />
          </HorizontalScroll>

          <TabBar>
            <TabNav>
              {navPaths.map((d) => (
                <svg key={d} width="9" height="11" viewBox="0 0 9 11" fill="#777d88" stroke="#777d88" strokeWidth=".8"><path d={d} /></svg>
              ))}
            </TabNav>
            <svg width="11" height="11" viewBox="0 0 11 11" stroke="#dfe9f5" strokeWidth="1.800"><path d="M.5 5.500h10.500M6 0v11" /></svg>
            <SheetTab>simple1</SheetTab>
          </TabBar>
        </MainPane>

        <Splitter>
          <SplitRail $h={224} />
          <SplitHandle>
            <svg width="4" height="7" viewBox="0 0 4 7"><path d="M0 0l4 3.500L0 7z" fill="#4a4e59" /></svg>
          </SplitHandle>
          <SplitRail $h={224} />
        </Splitter>
        <Sidebar>
          <DeckTitle>
            <svg width="23" height="32" viewBox="0 0 23 32" fill="none" stroke={FAINT}>
              <path d="M5 5.500h12M9 3.500h5M4 16.500h4M11 16.500h8" />
              <path d="M0 30.500h23" stroke="#3e4149" />
            </svg>
          </DeckTitle>
          <DeckButton $active>
            <svg width="16" height="16" viewBox="0 0 16 16" fill="none" stroke={FAINT}><path d="M.5 1.500h15M2.500 1v14h12v-10M6 5h8M2 3h12M6 8h6M6 11h6" strokeWidth="2" /></svg>
          </DeckButton>
          <DeckButton>
            <svg width="16" height="16" viewBox="0 0 16 16" fill="none" stroke={FAINT}><path d="M2 2.500h11M8 3v8M3 14l5-5 5 5" /></svg>
          </DeckButton>
          <DeckButton>
            <svg width="16" height="16" viewBox="0 0 16 16" fill="none" stroke={FAINT}><path d="M1.500 1.500h13v13h-13zM3 12l4-4 3 3M10 4h2v2h-2z" /></svg>
          </DeckButton>
          <DeckButton>
            <svg width="16" height="16" viewBox="0 0 16 16" fill="none" stroke={FAINT}><circle cx="8" cy="8" r="6.500" /><path d="M5 11l2-5 4-2-2 5z" /></svg>
          </DeckButton>
          <DeckButton>
            <svg width="16" height="16" viewBox="0 0 16 16" fill="none" stroke={FAINT}><path d="M10 2q-4-1-4 3v9" /></svg>
          </DeckButton>
        </Sidebar>
      </WorkArea>

      <FindBar>
        <FindGrip />
        <Tool $gap={12} $w={26}>
          <svg width="16" height="16" viewBox="0 0 16 16">
            <circle cx="8" cy="8" r="8" fill={RED} />
            <path d="M4.500 4.500l7 7m0-7l-7 7" stroke="#fff" strokeWidth="1.200" />
          </svg>
        </Tool>
        <Combo $w={248} $muted>Find<Chevron /></Combo>
        <FindAll>Find All</FindAll>
        <CheckBox />
        <CheckLabel $w={115}><Key>F</Key>ormatted Display</CheckLabel>
        <CheckBox />
        <CheckLabel $w={75}><Key>M</Key>atch Case</CheckLabel>
        <Separator $gap={0} />
        <Tool $gap={10}><Glyph name="find" /></Tool>
        <Separator $gap={12} />
      </FindBar>

      <StatusBar>
        <StatusField $w={362}>Sheet 1 of 1</StatusField>
        <StatusField $w={216}>Default</StatusField>
        <StatusField $w={212}>Russian</StatusField>
        <StatusField $w={164}>
          <svg width="11" height="11" viewBox="0 0 11 11" fill="none" stroke="#e0404f" strokeWidth="1.100">
            <path d="M.5.5h8l2 2v8H.5zM3 .5v3.500h5V.5M3 10.500V7h5.500v3.500M6.500 1v2" />
          </svg>
        </StatusField>
        <StatusField $w={232}>Average: ; Sum: 0</StatusField>
        <ZoomSlider />
        <span>100%</span>
      </StatusBar>

      <Taskbar>
        <TaskbarFoliage />
        <TaskGroup>
          <TrayItem $w={33}><svg width="33" height="20" viewBox="0 0 33 20"><g transform="translate(13 0)"><ManjaroIcon /></g></svg></TrayItem>
          <Pager><Desk $on /><Desk /></Pager>
          <Launcher>
            <svg width="8" height="13" viewBox="0 0 8 13" fill="none" stroke="#b9bcbd" strokeWidth="1.200"><path d="M1 .5l6 6-6 6" /></svg>
          </Launcher>
          <TaskButton><FilesIcon /></TaskButton>
          <TaskButton $kind="plain"><FirefoxIcon /></TaskButton>
          <TaskButton><ChromeIcon /></TaskButton>
          <TaskButton />
          <TaskButton $kind="active"><CalcIcon /></TaskButton>
        </TaskGroup>
        <TaskGroup>
          <TrayItem $w={27}><FlagIcon /></TrayItem>
          <TrayItem $w={26}><GhostIcon /></TrayItem>
          <TrayItem $w={28}><WifiIcon /></TrayItem>
          <TrayItem $w={27}><VolumeIcon /></TrayItem>
          <TrayItem $w={24}><ClipboardIcon /></TrayItem>
          <TrayItem $w={30}>
            <svg width="18" height="18" viewBox="0 0 18 18"><circle cx="9" cy="9" r="8.600" fill="#fbf86a" stroke="#e8dc1a" /></svg>
          </TrayItem>
          <TrayItem $w={21}>
            <svg width="10" height="6" viewBox="0 0 10 6" fill="none" stroke="#fff" strokeWidth="1.600"><path d="M.5 5.500L5 1l4.500 4.500" /></svg>
          </TrayItem>
          <TrayItem $w={35}><TrashIcon /></TrayItem>
          <Clock>00:27</Clock>
          <TrayItem $w={25}>
            <svg width="14" height="14" viewBox="0 0 14 14" fill="#8b9092">
              {[0, 5.3, 10.600].map((x) => [0, 5.300, 10.600].map((y) => <rect key={`${x}-${y}`} x={x} y={y} width="3.200" height="3.200" rx="1" />))}
            </svg>
          </TrayItem>
        </TaskGroup>
      </Taskbar>

      <Pointer width="16" height="22" viewBox="0 0 16 22">
        <path d="M1.500 1v16h5l2 3.500 2.500-1-1.500-4 3.500-3z" fill="#46484c" stroke="#fff" strokeWidth="1.200" />
      </Pointer>
    </Desktop>
  );
}
